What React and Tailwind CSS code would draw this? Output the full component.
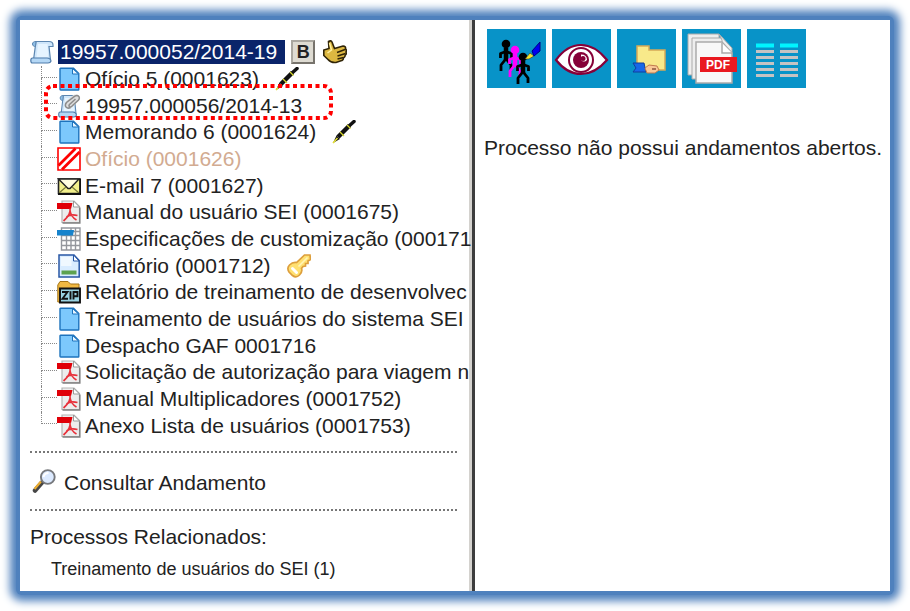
const Svg = ({ children, size = 24, className = "" }) => (
  <svg viewBox="0 0 24 24" width={size} height={size} className={`shrink-0 ${className}`} aria-hidden="true">
    {children}
  </svg>
);

const ScrollShape = () => (
  <>
    <path d="M6 1.500h13q4 0 4 3.500v1.500h-4L20.500 20H3.500Z" fill="#cfe6fa" stroke="#5c86b0" strokeWidth="1.200" />
    <path d="M6 1.500c-2.500 0-3.500 1-3.500 2.500s1 2.500 3 2.500Z" fill="#8fc0e8" stroke="#5c86b0" strokeWidth="1" />
    <path d="M8 4h9.500l.8 13.500H6.500Z" fill="#e6f4ff" />
    <path d="M2.500 18H17q3.500 0 4 3-.5 2-3 2H2.500Q.8 23 .8 20.500T2.500 18Z" fill="#b4d7f5" stroke="#4f7cab" strokeWidth="1.200" />
  </>
);

const ScrollIcon = () => (
  <Svg>
    <ScrollShape />
  </Svg>
);

const AttachedIcon = () => (
  <Svg>
    <g transform="translate(1 0) scale(.88 1)">
      <ScrollShape />
    </g>
    <path d="M9 7.500 15 2q4-2.500 7-.5 2 2.500 0 5l-7 7q-3 2-6 0-2-3 0-6Z" fill="#dedede" />
    <path d="m18.500 5-6 5.500q-1 1.500 0 2.200 1 .6 2.300-.5L21.500 6q1.500-2 .3-3.600-1.500-1.600-4-.2L9.500 8.500q-2 2.500-.5 4.500 1.800 2 4.500.5" fill="none" stroke="#8b8b8b" strokeWidth="1.500" />
  </Svg>
);

const DocIcon = () => (
  <Svg>
    <path d="M3.500 1.200h13L21.800 6.500v16q0 .5-.5 .5H3.700q-.7 0-.7-.7V1.900q0-.7.5-.7Z" fill="#7cc8fc" stroke="#1d73bd" strokeWidth="1.400" />
    <path d="M15.500 1.500V7h6Z" fill="#e6f5ff" stroke="#1d73bd" strokeWidth="1" />
  </Svg>
);

const CancelledIcon = () => (
  <Svg>
    <path d="M1 1h22v22H1Z" fill="#fff" stroke="#f00" strokeWidth="1.600" />
    <path d="M1.500 18.500 18.500 1.500M5 22.500 22.500 5" stroke="#f00" strokeWidth="2.800" />
  </Svg>
);

const MailIcon = () => (
  <Svg>
    <path d="M1.500 5h21.500v14.500H1.500Z" fill="#f2f08c" stroke="#222" strokeWidth="1.600" />
    <path d="M1.500 5 11 14.500h2L22 5Z" fill="#fffde0" stroke="#222" strokeWidth="1.400" />
    <path d="m2 19 7-6M22 19l-7-6" stroke="#7b7b3a" strokeWidth="1.200" />
    <path d="M1 20h22.500V5" fill="none" stroke="#111" strokeWidth="2" />
  </Svg>
);

const PdfIcon = () => (
  <Svg>
    <path d="M5 1h12L22.500 6.500v16H5Z" fill="#ededed" stroke="#b5b5b5" strokeWidth="1.200" />
    <path d="M22.800 7.500V23H5.500" fill="none" stroke="#808080" strokeWidth="1.500" />
    <path d="M16.500 1v6h6Z" fill="#fff" stroke="#999" strokeWidth="1" />
    <path d="M0 3h15.500L14 9H0Z" fill="#e00008" />
    <path d="M13 8.500c1 4-1.500 8-6.500 12.500M13 10.500c.5 3.500 3 7.500 6.500 9.500M9.500 17c3-2.500 7-2.500 11-1.500" fill="none" stroke="#e8303a" strokeWidth="1.700" />
  </Svg>
);

const SheetIcon = () => (
  <Svg>
    <path d="M4.500 1h18.500v22H4.500Z" fill="#fff" stroke="#94979d" strokeWidth="1.400" />
    <path d="M4.500 8.500H23M4.500 13.500H23M4.500 18.500H23M9.500 8v15M14 1v22M18.500 1v22M14 4.500h9" stroke="#94979d" strokeWidth="1.400" />
    <path d="M0 3h17l-1 5.500H0Z" fill="#1683cc" />
  </Svg>
);

const ReportIcon = () => (
  <Svg>
    <path d="M2 1h15l5.200 5.500V23H2Z" fill="#d9ecff" stroke="#2857a5" strokeWidth="1.500" />
    <path d="M4 3h10.500v9H4Z" fill="#f0f8ff" />
    <path d="M16.500 1v6H22Z" fill="#fff" stroke="#2857a5" strokeWidth="1" />
    <path d="M4.500 16.500h15v4h-15Z" fill="#5da24f" />
  </Svg>
);

const ZipIcon = () => (
  <Svg>
    <path d="M.8 5 3 1.500h8L13.500 4H22v18H.8Z" fill="#f1b942" stroke="#a57416" strokeWidth="1" />
    <path d="M3 8.500h20v14H3Z" fill="#9ad3e2" stroke="#111" strokeWidth="1.900" />
    <path d="M5 12h5.500L5.500 18.800H11M13.500 11.200v8.400M16.500 19.600V12h4v4.200h-4" fill="none" stroke="#111" strokeWidth="1.900" />
  </Svg>
);

const PenIcon = () => (
  <Svg>
    <path d="M6 17 17.500 5.500" stroke="#111" strokeWidth="4.500" />
    <path d="m17 6 5-4.500" stroke="#111" strokeWidth="3.500" strokeLinecap="round" />
    <path d="M4.500 15.500 8 19 1 23Z" fill="#111" />
    <path d="m8 12 4 4M15 5l3.500 3.500" stroke="#d8d82b" strokeWidth="1.300" />
    <path d="m1 23 4.500-5" stroke="#e4e037" strokeWidth="1.600" />
  </Svg>
);

const KeyIcon = () => (
  <Svg>
    <path d="M23 1h-5.500l-8 7.500c-3-.5-5 .5-7 2.500C.5 13 .5 15.500 2 18l3.500 3.500c2.500 2 5 1.500 7-.5s3-4 2-6.500l1.500-2 2.500-.5v-2.500H21V7l2.500-1.500Z" fill="#ffe071" stroke="#dd9f3d" strokeWidth="1.700" />
    <path d="m11.500 12.500 9-9" stroke="#fff4b8" strokeWidth="1.600" />
    <path d="m5.500 14.500 4 4" stroke="#fff" strokeWidth="3" strokeLinecap="round" />
  </Svg>
);

const ThumbIcon = () => (
  <Svg>
    <path d="M5.500 1.500Q8 0 9 2l2.500 6.500L20 6q3 0 2.500 3 1.500 1 .5 3 .8 2-.8 3.200 0 2-1.700 2.800-.3 2.500-2.500 2.800l-5 1.700q-5 .5-8-3L.8 15.500V10L6 8.500Z" fill="#ddb841" stroke="#302407" strokeWidth="1.600" />
    <path d="M14 12.500 22 9.500M14.500 16l8-2.500M14.500 19l6-1.500" stroke="#302407" strokeWidth="1.400" />
    <path d="m6.500 3 2 7-4 3" fill="none" stroke="#fff0a0" strokeWidth="1.500" />
  </Svg>
);

const SearchIcon = () => (
  <Svg>
    <path d="m3 21.500 7-8" stroke="#464646" strokeWidth="4.500" strokeLinecap="round" />
    <path d="m2.500 20 6.500-7.500" stroke="#eaac31" strokeWidth="2.200" />
    <circle cx="15.800" cy="8" r="6.900" fill="#dceaff" stroke="#77797d" strokeWidth="1.900" />
    <path d="M11.500 8q1-4 5-4" fill="none" stroke="#fff" strokeWidth="2" />
  </Svg>
);

const documents = [
  { icon: DocIcon, label: "Ofício 5 (0001623)", extra: PenIcon },
  { icon: AttachedIcon, label: "19957.000056/2014-13", marked: true },
  { icon: DocIcon, label: "Memorando 6 (0001624)", extra: PenIcon },
  { icon: CancelledIcon, label: "Ofício (0001626)", cancelled: true },
  { icon: MailIcon, label: "E-mail 7 (0001627)" },
  { icon: PdfIcon, label: "Manual do usuário SEI (0001675)" },
  { icon: SheetIcon, label: "Especificações de customização (000171" },
  { icon: ReportIcon, label: "Relatório (0001712)", extra: KeyIcon },
  { icon: ZipIcon, label: "Relatório de treinamento de desenvolvec" },
  { icon: DocIcon, label: "Treinamento de usuários do sistema SEI" },
  { icon: DocIcon, label: "Despacho GAF 0001716" },
  { icon: PdfIcon, label: "Solicitação de autorização para viagem n" },
  { icon: PdfIcon, label: "Manual Multiplicadores (0001752)" },
  { icon: PdfIcon, label: "Anexo Lista de usuários (0001753)" },
];

const Highlight = () => (
  <svg width="290" height="36" className="pointer-events-none absolute -top-2 left-0.5" aria-hidden="true">
    <rect x="3" y="2" width="285" height="32" rx="7" fill="none" stroke="#f00" strokeWidth="4" strokeDasharray="4 3.500" />
  </svg>
);

function TreeItem({ item, last }) {
  const Icon = item.icon;
  const Extra = item.extra;
  return (
    <li className="relative ml-[11px] flex items-center">
      <span className="flex w-4 shrink-0 flex-col self-stretch">
        <span className="h-3 border-b border-l border-dotted border-[#888]" />
        <span className={last ? "flex-1" : "flex-1 border-l border-dotted border-[#888]"} />
      </span>
      <Icon />
      <a href="#doc" className={item.cancelled ? "ml-1 text-[#d2ab91]" : "ml-1"}>
        {item.label}
      </a>
      {Extra && <span className="ml-4"><Extra /></span>}
      {item.marked && <Highlight />}
    </li>
  );
}

const Figure = ({ color, x, y }) => (
  <g transform={`translate(${x} ${y})`} stroke={color} strokeWidth="2.800" fill="none" strokeLinejoin="round">
    <circle r="4.300" fill={color} stroke="none" />
    <path d="M0 4v13" strokeWidth="4.500" />
    <path d="M-5.500 14V9.500L0 7.500l5.500 2V14M-1 16l-4 5v6M1 16l4 5v5" />
  </g>
);

const tools = [
  {
    label: "Atribuir processo",
    art: (
      <>
        <Figure color="#000" x={19} y={15} />
        <Figure color="#ff00ff" x={28} y={21} />
        <Figure color="#000" x={36} y={28} />
        <path d="m38 30 5-6 4 3-5 3Z" fill="#f4e62b" stroke="#333" strokeWidth=".6" />
        <path d="m45 22 8-9v9l-6 5Z" fill="#0000f0" stroke="#000080" />
      </>
    ),
  },
  {
    label: "Visualizar",
    art: (
      <>
        <path d="M4 31Q15 16 29 16t26 15Q43 45 29 45T4 31Z" fill="#fff" stroke="#860038" strokeWidth="2.200" />
        <circle cx="29" cy="31" r="12" fill="#fff" stroke="#860038" strokeWidth="2" />
        <circle cx="29" cy="31" r="8" fill="#860038" />
        <path d="M29 25.500q6 0 6 5.500-3 3-6 0Z" fill="#fff" />
        <circle cx="31" cy="29.500" r="2.500" fill="#860038" />
      </>
    ),
  },
  {
    label: "Enviar pasta",
    art: (
      <>
        <path d="M20 17h12v4h16v20H20Z" fill="#f8e98a" stroke="#d5a957" strokeWidth="1.500" />
        <path d="M16 34h11l2 9H16l3-4Z" fill="#1768e8" stroke="#103f9e" />
        <path d="m28 39 4-3 8 1 2 4-4 3h-8Z" fill="#f9c895" stroke="#c27b4d" />
        <path d="M35 40h4" stroke="#8a543c" strokeWidth="1.500" />
      </>
    ),
  },
  {
    label: "Gerar PDF",
    art: (
      <>
        <path d="M6 5h31v41H6Z" fill="#eee" stroke="#aaa" />
        <path d="M10 9h31v41H10Z" fill="#eee" stroke="#aaa" />
        <path d="M37 5 50 19v7l-10-1V11Z" fill="#eee" stroke="#aaa" />
        <path d="M14 13h26l10 11v30H14Z" fill="#f8f8f8" stroke="#aaa" strokeWidth="1.500" />
        <path d="M40 14v10h10" fill="#fff" stroke="#aaa" strokeWidth="1.500" />
        <path d="M18 28h37v15H18Z" fill="#e91920" />
        <text x="24" y="40" fill="#fff" fontSize="12" fontWeight="bold">PDF</text>
      </>
    ),
  },
  {
    label: "Listar campos",
    art: (
      <>
        <path d="M9 16.500h18m6 0h18" stroke="#00f5ff" strokeWidth="4" />
        <path d="M9 22.500h18m6 0h18M9 28.500h18m6 0h18M9 34.500h18m6 0h18M9 40.500h18m6 0h18M9 46.500h18m6 0h18" stroke="#c5c3c3" strokeWidth="3" />
      </>
    ),
  },
];

export default function App() {
  return (
    <div className="flex min-h-screen bg-white p-4 font-['Liberation_Sans',Arial,sans-serif] text-[21px] leading-6 text-[#222]">
      <div className="flex min-w-0 flex-1 rounded-md bg-[#4f81bd] p-1 shadow-[0_0_8px_6px_#4f81bd]">
        <div className="flex min-w-0 flex-1 bg-white">
          <aside className="flex w-[455px] shrink-0 flex-col border-r-3 border-[#3d3d3d]">
            <div className="flex flex-1 flex-col border-r-3 border-[#d4d2ce] pl-[10px]">
              <ul className="mt-[19px] grid h-[400px] auto-rows-fr whitespace-nowrap">
                <li className="flex items-center">
                  <ScrollIcon />
                  <a href="#processo" className="ml-1 bg-[#0a246a] pr-2 pl-0.5 text-white">19957.000052/2014-19</a>
                  <button type="button" className="ml-1.5 size-6 border-2 border-t-[#aaa7a0] border-r-[#77736c] border-b-[#77736c] border-l-[#aaa7a0] bg-[#dedbd2] text-[18px] leading-5 font-bold">B</button>
                  <span className="ml-2"><ThumbIcon /></span>
                </li>
                {documents.map((item, i) => (
                  <TreeItem key={item.label} item={item} last={i === documents.length - 1} />
                ))}
              </ul>
              <hr className="mt-3 mr-3 border-t-2 border-dotted border-[#777]" />
              <a href="#andamento" className="mt-4 flex items-start gap-2 pl-0.5">
                <SearchIcon />
                <span className="pt-0.5">Consultar Andamento</span>
              </a>
              <hr className="mt-3.5 mr-3 border-t-2 border-dotted border-[#777]" />
              <h2 className="mt-3.5">Processos Relacionados:</h2>
              <a href="#relacionado" className="mt-2 ml-[21px] text-[18px]">Treinamento de usuários do SEI (1)</a>
            </div>
          </aside>
          <main className="min-w-0 flex-1 pt-[9px] pl-[9px]">
            <div className="ml-[3px] flex gap-1.5">
              {tools.map((tool) => (
                <button key={tool.label} type="button" aria-label={tool.label} className="size-[59px] bg-[#0893c8]">
                  <svg viewBox="0 0 59 59" className="size-full" aria-hidden="true">{tool.art}</svg>
                </button>
              ))}
            </div>
            <p className="mt-12 whitespace-nowrap">Processo não possui andamentos abertos.</p>
          </main>
        </div>
      </div>
    </div>
  );
}
